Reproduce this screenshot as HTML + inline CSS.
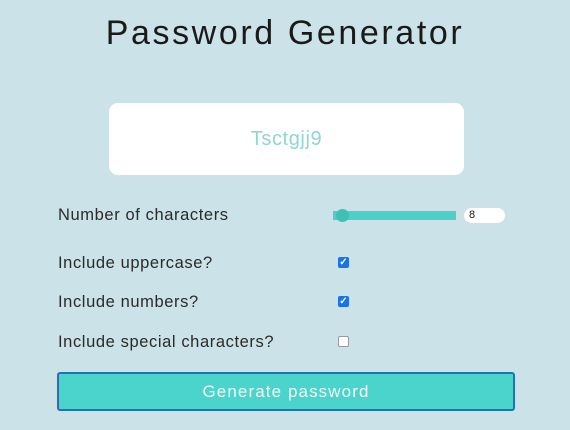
<!DOCTYPE html>
<html><head><style>
body{margin:0;width:570px;height:430px;background:#cbe3e8;font-family:"Liberation Sans",sans-serif;position:relative;overflow:hidden;color:#1a1a1a}
.t{position:absolute;top:14px;left:0;width:570px;text-align:center;font-size:34px;letter-spacing:2.6px}
.box{position:absolute;left:109px;top:103px;width:355px;height:72px;background:#fff;border-radius:9px;text-align:center;line-height:72px;color:#8fd6d4;font-size:20px;letter-spacing:.6px}
.l{position:absolute;left:58px;font-size:16.5px;letter-spacing:.6px;color:#2a2a2a}
.cb{position:absolute;left:338px;width:11px;height:11px;border-radius:2px;background:#1a73e8;color:#fff;font-size:10px;line-height:11px;text-align:center;font-weight:bold}
.cb.off{background:#fff;border:1px solid #999;width:9px;height:9px}
.sl{position:absolute;left:333px;top:211px;width:123px;height:9px;background:#4dd0c9}
.th{position:absolute;left:336px;top:209px;width:13px;height:13px;border-radius:50%;background:#3ec0b5}
.num{position:absolute;left:464px;top:208px;width:41px;height:15px;background:#fff;border-radius:8px;font-size:11px;line-height:15px;padding-left:5px;box-sizing:border-box}
.btn{position:absolute;left:57px;top:372px;width:458px;height:39px;box-sizing:border-box;background:#4ad4cb;border:2px solid #2a6fb3;border-radius:3px;color:#f2fbfa;font-size:17px;text-align:center;line-height:35px;letter-spacing:1.1px}
</style></head><body>
<div class="t">Password Generator</div>
<div class="box">Tsctgjj9</div>
<div class="l" style="top:206px">Number of characters</div>
<div class="sl"></div><div class="th"></div><div class="num">8</div>
<div class="l" style="top:254px">Include uppercase?</div><div class="cb" style="top:257px">✓</div>
<div class="l" style="top:293px">Include numbers?</div><div class="cb" style="top:296px">✓</div>
<div class="l" style="top:333px">Include special characters?</div><div class="cb off" style="top:336px"></div>
<div class="btn">Generate password</div>
</body></html>
